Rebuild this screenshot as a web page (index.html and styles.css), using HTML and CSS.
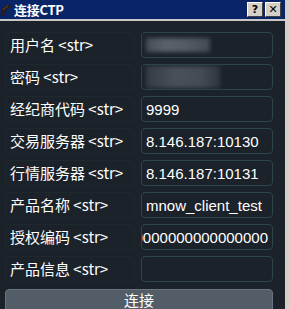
FILE: index.html
```html
<!DOCTYPE html>
<html lang="zh">
<head>
    <meta charset="UTF-8">
    <title>连接CTP</title>
    <link rel="stylesheet" href="styles.css">
</head>
<body>
    <div class="window">
        <div class="titlebar">
            <svg class="app-icon" width="13" height="14" viewBox="0 0 13 14">
                <path d="M1 13 L2 6 Q4 2 9 2 L12 4 L9 5 Q6 6 5 9 L4 13 Z" fill="#2a1c18"/>
                <path d="M3 7 Q5 4 8 3" stroke="#6b4a3a" stroke-width="1" fill="none"/>
            </svg>
            <span class="title">连接CTP</span>
            <div class="title-buttons">
                <span class="tbtn">?</span>
                <span class="tbtn">✕</span>
            </div>
        </div>
        <div class="content">
            <div class="row">
                <div class="label">用户名 &lt;str&gt;</div>
                <div class="field"><span class="blur blur-a"></span></div>
            </div>
            <div class="row">
                <div class="label">密码 &lt;str&gt;</div>
                <div class="field"><span class="blur blur-b"></span></div>
            </div>
            <div class="row">
                <div class="label">经纪商代码 &lt;str&gt;</div>
                <div class="field"><span class="value">9999</span></div>
            </div>
            <div class="row">
                <div class="label">交易服务器 &lt;str&gt;</div>
                <div class="field"><span class="value">8.146.187:10130</span></div>
            </div>
            <div class="row">
                <div class="label">行情服务器 &lt;str&gt;</div>
                <div class="field"><span class="value">8.146.187:10131</span></div>
            </div>
            <div class="row">
                <div class="label">产品名称 &lt;str&gt;</div>
                <div class="field"><span class="value">mnow_client_test</span></div>
            </div>
            <div class="row">
                <div class="label">授权编码 &lt;str&gt;</div>
                <div class="field field-end"><span class="value">00000000000000000</span></div>
            </div>
            <div class="row">
                <div class="label">产品信息 &lt;str&gt;</div>
                <div class="field"></div>
            </div>
            <button class="connect">连接</button>
        </div>
    </div>
</body>
</html>
```

FILE: styles.css
```css
body, html {
    margin: 0;
    padding: 0;
    background-color: #1b222a;
    overflow: hidden;
}
.window {
    width: 285px;
    height: 309px;
    border-right: 4px solid #d4d0c8;
    font-family: "Noto Sans CJK SC", "Liberation Sans", sans-serif;
}
.titlebar {
    height: 19px;
    background-color: #0a2468;
    border-bottom: 2px solid #c8c8c8;
    display: flex;
    align-items: center;
    color: white;
}
.app-icon {
    margin-right: 1px;
}
.title {
    font-family: "Noto Sans CJK SC", "DejaVu Sans", sans-serif;
    font-weight: bold;
    font-size: 13px;
    letter-spacing: -0.3px;
}
.title-buttons {
    margin-left: auto;
    display: flex;
    gap: 2px;
    margin-right: 4px;
}
.tbtn {
    width: 14px;
    height: 13px;
    background: #d4d0c8;
    border-top: 1px solid #ffffff;
    border-left: 1px solid #ffffff;
    border-right: 1px solid #404040;
    border-bottom: 1px solid #404040;
    color: black;
    font-family: "DejaVu Sans", sans-serif;
    font-weight: bold;
    font-size: 11px;
    line-height: 13px;
    text-align: center;
}
.content {
    padding: 11px 12px 0 5px;
    display: flex;
    flex-direction: column;
    gap: 6px;
}
.row {
    display: flex;
    height: 26px;
    gap: 6px;
}
.label {
    width: 124px;
    padding-left: 4px;
    border: 1px solid #1f272f;
    border-radius: 4px;
    color: #ffffff;
    font-size: 15px;
    line-height: 24px;
    white-space: nowrap;
}
.field {
    flex: 1;
    border: 1px solid #2f434a;
    border-radius: 4px;
    display: flex;
    align-items: center;
    padding-left: 4px;
    overflow: hidden;
}
.field-end {
    justify-content: flex-end;
    padding-right: 4px;
}
.value {
    color: #ffffff;
    font-family: "Liberation Sans", sans-serif;
    font-size: 15px;
    white-space: nowrap;
}
.blur {
    display: block;
    filter: blur(2px);
}
.blur-a {
    width: 64px;
    height: 14px;
    background: linear-gradient(90deg, #474d55 0%, #5b6169 30%, #565c64 60%, #454b53 100%);
}
.blur-b {
    width: 74px;
    height: 22px;
    background: linear-gradient(90deg, #363c44 0%, #4a5058 40%, #454b53 75%, #30363e 100%);
}
.connect {
    margin-top: 1px;
    height: 28px;
    background-color: #525d68;
    border: 1px solid #6a7480;
    border-radius: 4px;
    color: #ffffff;
    font-family: "Noto Sans CJK SC", sans-serif;
    font-size: 15px;
    padding: 0;
    line-height: 18px;
    text-align: center;
    display: flex;
    justify-content: center;
    align-items: flex-start;
    padding-top: 1px;
}
```
